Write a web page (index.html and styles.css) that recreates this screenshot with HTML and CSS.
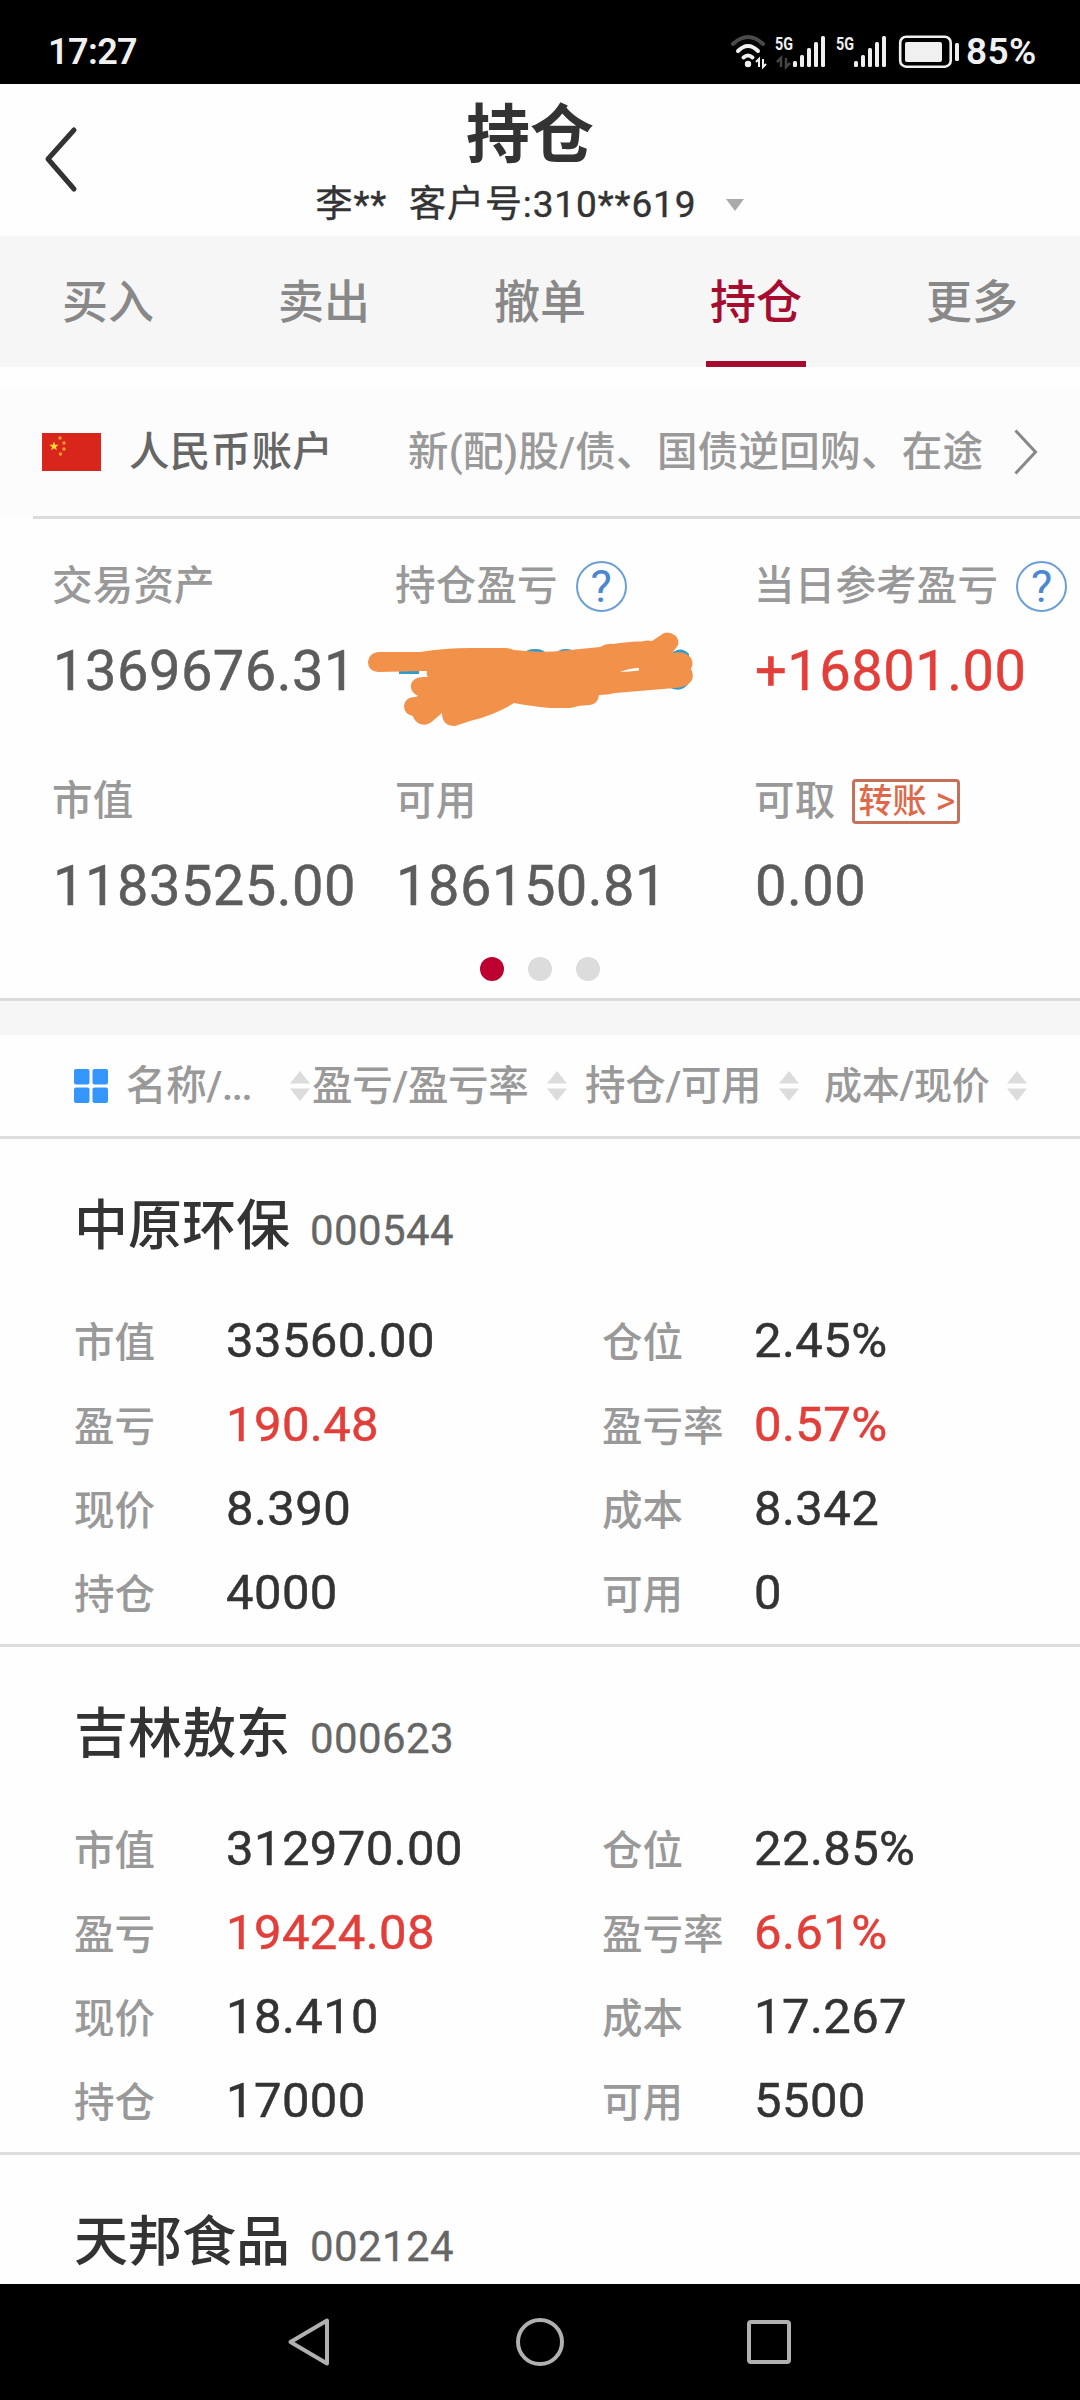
FILE: index.html
```html
<!DOCTYPE html>
<html lang="zh-CN">
<head>
  <meta charset="UTF-8">
  <title>持仓</title>
  <link rel="stylesheet" href="styles.css">
</head>
<body>

<div class="status">
  <span class="time">17:27</span>
  <svg class="status-icons" width="232" height="44" viewBox="0 -8 232 44">
    <!-- wifi -->
    <g fill="none" stroke="#f0f0f0" stroke-width="4" stroke-linecap="round">
      <path d="M3 10 Q18 -4 33 10" stroke="#4a4a4a"/>
      <path d="M8 17 Q18 7 28 17"/>
      <path d="M13.5 23.5 Q18 19.5 22.5 23.5"/>
    </g>
    <circle cx="18" cy="30" r="3.2" fill="#f0f0f0"/>
    <path d="M26 28l3-3v8M33 25v8l3-3" fill="none" stroke="#f0f0f0" stroke-width="2"/>
    <!-- sim 1 -->
    <text class="net" x="45" y="16" textLength="18" lengthAdjust="spacingAndGlyphs">5G</text>
    <path d="M47 28l4-4v9M56 24v9l4-4" fill="none" stroke="#444" stroke-width="2.5"/>
    <g fill="#f0f0f0">
      <rect x="63" y="27" width="4" height="6" rx="1.5"/><rect x="70" y="21" width="4" height="12" rx="1.5"/><rect x="77" y="14" width="4" height="19" rx="1.5"/><rect x="84" y="8" width="4" height="25" rx="1.5"/><rect x="91" y="2" width="4" height="31" rx="1.5"/>
    </g>
    <!-- sim 2 -->
    <text class="net" x="106" y="16" textLength="18" lengthAdjust="spacingAndGlyphs">5G</text>
    <g fill="#f0f0f0">
      <rect x="124" y="27" width="4" height="6" rx="1.5"/><rect x="131" y="21" width="4" height="12" rx="1.5"/><rect x="138" y="14" width="4" height="19" rx="1.5"/><rect x="145" y="8" width="4" height="25" rx="1.5"/><rect x="152" y="2" width="4" height="31" rx="1.5"/>
    </g>
    <!-- battery -->
    <rect x="170.2" y="2.7" width="50.5" height="30" rx="6" fill="none" stroke="#f0f0f0" stroke-width="2.6"/>
    <rect x="175" y="8" width="37" height="20" rx="2" fill="#f0f0f0"/>
    <rect x="225" y="9" width="4" height="18" rx="1.5" fill="#f0f0f0"/>
  </svg>
  <span class="percent">85%</span>
</div>

<div class="header">
  <svg class="back" width="40" height="70" viewBox="0 0 40 70"><path d="M32 6L6 35l26 30" fill="none" stroke="#333" stroke-width="5" stroke-linecap="round" stroke-linejoin="round"/></svg>
  <div class="heading">
    <h1>持仓</h1>
    <div class="client"><span>李**</span><span>客户号:310**619</span><svg width="18" height="12" viewBox="0 0 18 12"><path d="M0 0h18l-9 12z" fill="#aaa"/></svg></div>
  </div>
</div>

<div class="tabs">
  <div class="tab">买入</div>
  <div class="tab">卖出</div>
  <div class="tab">撤单</div>
  <div class="tab active">持仓</div>
  <div class="tab">更多</div>
</div>

<div class="account">
  <svg class="flag" width="59" height="38" viewBox="0 0 59 38">
    <rect width="59" height="38" fill="#d9261c"/>
    <path d="M12 8.5l1.2 3.2 3.4.1-2.7 2.1 1 3.3-2.9-1.9-2.9 1.9 1-3.3-2.7-2.1 3.4-.1z" fill="#fd3"/>
    <g fill="#f2a02c"><circle cx="18" cy="5" r="1.7"/><circle cx="22" cy="10" r="1.7"/><circle cx="22" cy="16" r="1.7"/><circle cx="18.500" cy="21" r="1.7"/></g>
  </svg>
  <span class="account-name">人民币账户</span>
  <span class="account-more">新(配)股/债、国债逆回购、在途</span>
  <svg class="go" width="24" height="46" viewBox="0 0 24 46"><path d="M1.500 1.500L21.500 23l-20 21.500" fill="none" stroke="#888" stroke-width="3"/></svg>
</div>

<div class="assets">
  <div class="asset">
    <div class="label">交易资产</div>
    <div class="amount">1369676.31</div>
  </div>
  <div class="asset">
    <div class="label">持仓盈亏<span class="help">?</span></div>
    <div class="amount">
      <!-- amount hidden under a marker scribble -->
      <svg class="scribble" width="360" height="140" viewBox="0 0 360 140">
        <g fill="#2b9ccb"><rect x="49" y="71" width="20" height="3"/><ellipse cx="185" cy="54" rx="11" ry="5"/><ellipse cx="216" cy="53" rx="9" ry="4"/><path d="M318 56Q330 44 339 54V60H318zM318 87Q334 95 341 79H318z"/><path d="M85 52l14-3v4z"/></g>
        <path fill="#f2924a" d="M28 52H70Q95 48 120 48H155Q160 48 164 50Q195 53 210 51L250 47Q257 43 263 44Q280 41 292 41.500Q297 40 302 41L314 33Q320 31 326 36Q331 43 326 48L322 53Q335 50 341 58Q344 64 341 69Q344 74 342 80Q338 87 325 88L265 93Q258 95 249 95Q248 104 240 105Q230 105 220 108H200Q180 106 164 103Q145 115 120 121L105 126Q92 126 92 113L85 119Q76 128 68 123Q63 119 63 116Q54 114 54 106Q55 97 65 97L68 96Q60 92 61 85Q63 77 73 77H78Q76 75 77 71L28 72Q18 71 18 62Q19 53 28 52z"/>
        <path d="M270 72q10-4 19-4v2.500q-9 1-19 1.500z" fill="#fff"/>
      </svg>
    </div>
  </div>
  <div class="asset">
    <div class="label">当日参考盈亏<span class="help">?</span></div>
    <div class="amount up">+16801.00</div>
  </div>
  <div class="asset">
    <div class="label">市值</div>
    <div class="amount">1183525.00</div>
  </div>
  <div class="asset">
    <div class="label">可用</div>
    <div class="amount">186150.81</div>
  </div>
  <div class="asset">
    <div class="label">可取<span class="transfer">转账<i>&gt;</i></span></div>
    <div class="amount">0.00</div>
  </div>
</div>
<div class="dots"><span class="dot on"></span><span class="dot"></span><span class="dot"></span></div>

<div class="columns">
  <div class="col">
    <svg class="layout" width="34" height="34" viewBox="0 0 34 34"><g fill="#3496fb"><rect width="15.500" height="15.500" rx="2"/><rect x="18.500" width="15.500" height="15.500" rx="2"/><rect y="18.500" width="15.500" height="15.500" rx="2"/><rect x="18.500" y="18.500" width="15.500" height="15.500" rx="2"/></g></svg>
    <span>名称/<span class="more">...</span></span><svg class="sort" width="20" height="30" viewBox="0 0 20 30"><path d="M10 0l10 12.500H0zM0 17.500h20L10 30z"/></svg>
  </div>
  <div class="col"><span>盈亏/盈亏率</span><svg class="sort" width="20" height="30" viewBox="0 0 20 30"><path d="M10 0l10 12.500H0zM0 17.500h20L10 30z"/></svg></div>
  <div class="col"><span>持仓/可用</span><svg class="sort" width="20" height="30" viewBox="0 0 20 30"><path d="M10 0l10 12.500H0zM0 17.500h20L10 30z"/></svg></div>
  <div class="col small"><span>成本/现价</span><svg class="sort" width="20" height="30" viewBox="0 0 20 30"><path d="M10 0l10 12.500H0zM0 17.500h20L10 30z"/></svg></div>
</div>

<div class="list">
  <div class="stock">
    <div class="stock-name">中原环保<span class="code">000544</span></div>
    <div class="detail">
      <span class="key">市值</span><span class="val">33560.00</span><span class="key">仓位</span><span class="val">2.45%</span>
      <span class="key">盈亏</span><span class="val up">190.48</span><span class="key">盈亏率</span><span class="val up">0.57%</span>
      <span class="key">现价</span><span class="val">8.390</span><span class="key">成本</span><span class="val">8.342</span>
      <span class="key">持仓</span><span class="val">4000</span><span class="key">可用</span><span class="val">0</span>
    </div>
  </div>
  <div class="stock">
    <div class="stock-name">吉林敖东<span class="code">000623</span></div>
    <div class="detail">
      <span class="key">市值</span><span class="val">312970.00</span><span class="key">仓位</span><span class="val">22.85%</span>
      <span class="key">盈亏</span><span class="val up">19424.08</span><span class="key">盈亏率</span><span class="val up">6.61%</span>
      <span class="key">现价</span><span class="val">18.410</span><span class="key">成本</span><span class="val">17.267</span>
      <span class="key">持仓</span><span class="val">17000</span><span class="key">可用</span><span class="val">5500</span>
    </div>
  </div>
  <div class="stock">
    <div class="stock-name">天邦食品<span class="code">002124</span></div>
  </div>
</div>

<div class="navbar">
  <svg width="48" height="50" viewBox="0 0 48 50"><path d="M40 3.500v43L3.500 25z" fill="none" stroke="#b0b0b0" stroke-width="4" stroke-linejoin="round"/></svg>
  <svg width="48" height="50" viewBox="0 0 48 50"><circle cx="24" cy="25" r="22" fill="none" stroke="#b0b0b0" stroke-width="4"/></svg>
  <svg width="48" height="50" viewBox="0 0 48 50"><rect x="4" y="5" width="40" height="40" rx="2" fill="none" stroke="#b0b0b0" stroke-width="4"/></svg>
</div>

</body>
</html>
```
FILE: styles.css
```css
* { box-sizing: border-box; }
body {
  margin: 0; width: 1080px; height: 2400px; overflow: hidden;
  display: flex; flex-direction: column;
  background: #fefefe; color: #333;
  font-family: Roboto, "Noto Sans CJK SC", sans-serif; font-weight: 500;
}
svg { display: block; flex: none; }
span, div { white-space: nowrap; }

.status {
  height: 84px; flex: none; background: #000; color: #f0f0f0;
  display: flex; align-items: center; padding: 20px 0 0 48px;
  font-size: 36px; font-weight: 600; line-height: 64px;
}
.time { letter-spacing: -.6px; }
.status-icons { margin-left: auto; margin-top: -8px; }
.percent { width: 118px; padding-left: 4px; font-size: 37px; letter-spacing: .4px; }
.net { fill: #f0f0f0; font-size: 19px; font-weight: 700; }

.header { height: 152px; flex: none; display: flex; padding-left: 42px; }
.back { margin-top: 40px; }
.heading { width: 896px; display: flex; flex-direction: column; align-items: center; }
.heading h1 { margin: 11px 0 0; font-size: 64px; line-height: 82px; font-weight: 700; }
.client { display: flex; align-items: center; font-size: 37px; line-height: 55px; letter-spacing: .9px; font-weight: 400; -webkit-text-stroke: .4px; }
.client span + span { margin-left: 22px; }
.client svg { margin: 0 0 0 30px; }

.tabs { height: 131px; flex: none; background: #f6f6f6; display: flex; }
.tab {
  flex: 1; margin: 0 58px; text-align: center;
  font-size: 46px; line-height: 133px; color: #888;
}
.tab.active { color: #a50c30; border-bottom: 6px solid #a50c30; }

.account {
  height: 131px; flex: none; margin-top: 21px; background: #fcfcfc;
  display: flex; align-items: center; padding-left: 42px;
  border-bottom: 3px solid #dcdcdc; border-image: linear-gradient(90deg, #fefefe 34px, #dcdcdc 34px) 1;
  font-size: 40.5px; line-height: 60px; letter-spacing: .3px;
}
.account-name { color: #666; margin-left: 28px; width: 279px; }
.account-more { color: #999; width: 606px; }

.assets {
  flex: none; height: 429px; display: grid; grid-template-rows: 215px 214px;
  grid-template-columns: 343px 359px 1fr; padding-left: 52px;
}
.asset { padding-top: 37px; position: relative; }
.label { display: flex; align-items: center; height: 60px; font-size: 40.5px; line-height: 60px; letter-spacing: .2px; color: #999; }
.amount { margin-top: 24px; padding-left: 1px; font-size: 56px; font-weight: 400; line-height: 62px; letter-spacing: .5px; color: #5c5c5c; -webkit-text-stroke: .5px; }
.amount.up, .val.up { color: #e23f3a; }
.help {
  width: 51px; height: 51px; margin-left: 18px; border: 2px solid #6c9fd8; border-radius: 50%;
  color: #4b88d0; font-size: 45px; font-weight: 400; line-height: 47px; text-align: center;
}
.transfer {
  display: flex; height: 45px; width: 108px; margin-left: 17px; padding-left: 3px;
  border: 3px solid #c4705a; border-radius: 4px;
  color: #dd694a; font-size: 34px; line-height: 39px; letter-spacing: 0;
}
.transfer i { margin-left: 9px; font-style: normal; font-weight: 400; font-size: 38px; }
.scribble { position: absolute; left: -45px; top: 81px; }

.dots { height: 50px; flex: none; display: flex; justify-content: center; gap: 24px; padding-top: 9px; }
.dot { width: 24px; height: 24px; border-radius: 50%; background: #dcdcdc; }
.dot.on { background: #bc0030; }

.columns {
  flex: none; height: 141px; padding-left: 74px;
  border-top: 3px solid #dcdcdc; border-bottom: 3px solid #dcdcdc;
  background: linear-gradient(#f6f6f6 34px, #fefefe 34px); padding-top: 34px;
  display: grid; grid-template-columns: 238px 273px 239px 1fr;
  font-size: 40.5px; line-height: 100px; color: #999;
}
.col { display: flex; align-items: center; }
.col .layout { margin-right: 18px; }
.col span { flex: none; letter-spacing: -.3px; }
.col .more { letter-spacing: -1.5px; }
.sort { fill: #dcdcdc; margin-left: 18px; }
.col:first-child .sort { margin-left: auto; margin-right: 2px; }
.col.small { font-size: 38px; }

.list { flex: 1; overflow: hidden; }
.stock { height: 508px; border-bottom: 3px solid #dcdcdc; padding-left: 74px; }
.stock-name { height: 160px; padding-top: 37px; font-size: 54px; line-height: 102px; }
.code { font-size: 42px; font-weight: 400; color: #666; margin-left: 20px; letter-spacing: .4px; -webkit-text-stroke: .3px; }
.detail { display: grid; grid-template-columns: 152px 376px 152px 1fr; grid-auto-rows: 84px; line-height: 84px; }
.key { font-size: 40.5px; color: #999; padding-top: 2px; }
.val { font-size: 49px; font-weight: 400; letter-spacing: .4px; -webkit-text-stroke: .5px; }

.navbar {
  height: 116px; flex: none; background: #000;
  display: flex; justify-content: center; align-items: center; gap: 181px;
}
```
